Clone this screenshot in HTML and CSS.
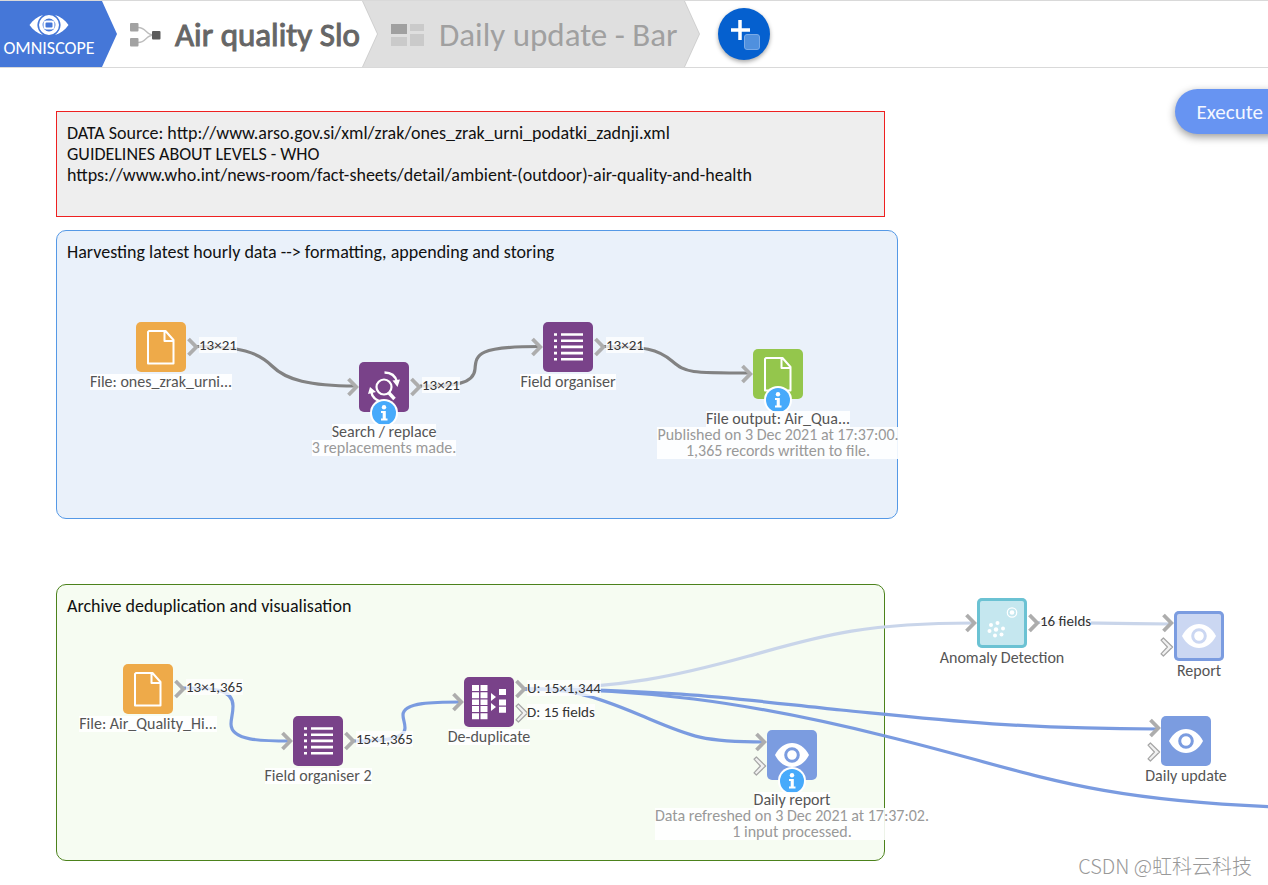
FILE: index.html
```html
<!DOCTYPE html>
<html lang="en">
<head>
<meta charset="utf-8">
<meta name="viewport" content="width=device-width, initial-scale=1">
<title>Omniscope - Air quality</title>
<link rel="stylesheet" href="styles.css">
</head>
<body>
<svg class="sprite" aria-hidden="true">
  <symbol id="chevron" viewBox="0 0 12 20"><path d="M1.5 2 9.3 10 1.5 18" fill="none" stroke="#adadad" stroke-width="3.8"/></symbol>
  <symbol id="chevron-open" viewBox="0 0 14 20"><path d="M1 3.2 3.4 1 12.6 10 3.4 19 1 16.8 7.4 10Z" fill="#f1f1f1" stroke="#a6a6a6" stroke-width="1.2" stroke-linejoin="round"/></symbol>
  <symbol id="file" viewBox="0 0 50 50"><path d="M13 9h16.500L37.500 18v23.500h-25.500V10ZM28.500 9v10H37.500" fill="none" stroke="#fff" stroke-width="2" stroke-linejoin="round"/></symbol>
  <symbol id="list" viewBox="0 0 50 50"><path d="M11 12.500h3M11 18.700h3M11 24.900h3M11 31.100h3M11 37.300h3M18 12.500h22M18 18.700h22M18 24.900h22M18 31.100h22M18 37.300h22" stroke="#fff" stroke-width="2.600"/></symbol>
  <symbol id="eye" viewBox="0 0 50 50"><path d="M8 25C16 9 34 9 42 25 34 41 16 41 8 25Z" fill="#fff"/><circle cx="25" cy="25" r="6.300" fill="none" stroke="currentColor" stroke-width="3"/></symbol>
  <symbol id="info" viewBox="0 0 28 28"><circle cx="14" cy="14" r="14" fill="#fff"/><circle cx="14" cy="14" r="12" fill="#47aafb"/><circle cx="14" cy="8.300" r="2.200" fill="#fff"/><path d="M11 12h4.800v7.500H17.500v2H11v-2h1.700V14H11Z" fill="#fff"/></symbol>
</svg>

<header class="topbar">
  <button class="tab tab-home" type="button">
    <svg width="40" height="22" viewBox="0 0 40 22" aria-hidden="true">
      <path d="M14 1C8.500 2.500 4 6 .5 11c3.500 5 8 8.500 13.500 10C6.500 15 6.500 7 14 1ZM26 1c5.500 1.500 10 5 13.500 10-3.500 5-8 8.500-13.500 10 7.500-6 7.500-14 0-20Z" fill="#fff"/>
      <circle cx="20" cy="11" r="8.200" fill="none" stroke="#fff" stroke-width="3.600"/>
      <rect x="15.500" y="7.500" width="9" height="7" rx="2" fill="none" stroke="#fff" stroke-width="2"/>
    </svg>
    <span>OMNISCOPE</span>
  </button>
  <button class="tab tab-active" type="button">
    <svg width="31" height="24" viewBox="0 0 31 24" aria-hidden="true">
      <path d="M8 4.500C17 4.500 15 12 24 12M8 19.500C17 19.500 15 12 24 12" fill="none" stroke="#bdbdbd" stroke-width="1.300"/>
      <rect width="8.500" height="8.500" rx="1" fill="#a2a2a2"/><rect y="15" width="8.500" height="8.500" rx="1" fill="#a2a2a2"/>
      <rect x="22" y="8" width="8.500" height="8.500" rx="1" fill="#5c5c5c"/>
    </svg>
    <span>Air quality Slo</span>
  </button>
  <button class="tab tab-next" type="button">
    <svg width="34" height="24" viewBox="0 0 34 24" aria-hidden="true">
      <path d="M0 1h16v10H0Z" fill="#a0a0a0"/><path d="M19 1h14v7H19ZM0 14h16v9H0ZM19 11h14v12H19Z" fill="#cacaca"/>
    </svg>
    <span>Daily update - Bar</span>
  </button>
  <button class="add" type="button" aria-label="Add">
    <svg width="52" height="52" viewBox="0 0 52 52" aria-hidden="true">
      <path d="M22 12v20M13 22h19" stroke="#fff" stroke-width="3.500"/>
      <rect x="26.500" y="26.500" width="15" height="15" rx="2.500" fill="#5090de" stroke="#79aae8"/>
    </svg>
  </button>
</header>

<main class="canvas">
  <section class="group note">DATA Source: http://www.arso.gov.si/xml/zrak/ones_zrak_urni_podatki_zadnji.xml<br>GUIDELINES ABOUT LEVELS - WHO<br>https://www.who.int/news-room/fact-sheets/detail/ambient-(outdoor)-air-quality-and-health</section>
  <section class="group harvest">Harvesting latest hourly data --&gt; formatting, appending and storing</section>
  <section class="group archive">Archive deduplication and visualisation</section>

  <svg class="wires" aria-hidden="true">
    <g transform="translate(0 -68)" fill="none" stroke-width="3.200">
      <g stroke="#828282">
        <path d="M197 346.500C240 346.500 258 352 272 366S310 386 355 386"/>
        <path d="M420 386C455 386 474 384 475 369S478 346.500 540 346.500"/>
        <path d="M604 346.500C645 346.500 658 349 672 361S690 373 750 373"/>
      </g>
      <path d="M525 689C620 689 680 675 749 656S860 623 973 623M1037 622.500C1100 622.500 1100 624 1171 624" stroke="#c9d5ea"/>
      <g stroke="#7a9be0">
        <path d="M183 688C215 688 233 689 233 706C233 714 231 718 231 724C231 741 262 741 290 741"/>
        <path d="M354 741C385 741 405 739 405 728C405 722 403 720 403 715C403 702 435 702 461 702"/>
        <path d="M525 689C570 689 590 694 640 715S700 742 764 742"/>
        <path d="M525 689C680 689 760 702 841 710S1010 729 1157 729"/>
        <path d="M525 689C640 689 740 700 885 736C1030 771 1080 800 1280 807"/>
      </g>
    </g>
  </svg>

  <article class="node n-file">
    <div class="tile orange"><svg><use href="#file"/></svg></div>
    <svg class="port out mid"><use href="#chevron"/></svg><span class="count mid">13×21</span>
    <span class="name">File: ones_zrak_urni...</span>
  </article>

  <article class="node n-search has-info">
    <svg class="port in mid"><use href="#chevron"/></svg>
    <div class="tile purple"><svg viewBox="0 0 50 50"><circle cx="25" cy="25" r="7.500" fill="none" stroke="#fff" stroke-width="2.200"/><path d="m30 31 5.500 6" stroke="#fff" stroke-width="3.400"/><path d="M25.500 10.500C32 10.500 36.500 14 38 20M24 40C17 39 13 35 12 29" fill="none" stroke="#fff" stroke-width="2.400"/><path d="m33.500 18.500 7.500-1-2.500 7.500ZM9 32l2-7 6 5Z" fill="#fff"/></svg></div>
    <svg class="badge"><use href="#info"/></svg>
    <svg class="port out mid"><use href="#chevron"/></svg><span class="count mid">13×21</span>
    <span class="name">Search / replace</span>
    <span class="status">3 replacements made.</span>
  </article>

  <article class="node n-organiser">
    <svg class="port in mid"><use href="#chevron"/></svg>
    <div class="tile purple"><svg><use href="#list"/></svg></div>
    <svg class="port out mid"><use href="#chevron"/></svg><span class="count mid">13×21</span>
    <span class="name">Field organiser</span>
  </article>

  <article class="node n-output has-info">
    <svg class="port in mid"><use href="#chevron"/></svg>
    <div class="tile green"><svg><use href="#file"/></svg></div>
    <svg class="badge"><use href="#info"/></svg>
    <span class="name">File output: Air_Qua...</span>
    <span class="status">Published on 3 Dec 2021 at 17:37:00.<br>1,365 records written to file.</span>
  </article>

  <article class="node n-history">
    <div class="tile orange"><svg><use href="#file"/></svg></div>
    <svg class="port out mid"><use href="#chevron"/></svg><span class="count mid">13×1,365</span>
    <span class="name">File: Air_Quality_Hi...</span>
  </article>

  <article class="node n-organiser2">
    <svg class="port in mid"><use href="#chevron"/></svg>
    <div class="tile purple"><svg><use href="#list"/></svg></div>
    <svg class="port out mid"><use href="#chevron"/></svg><span class="count mid">15×1,365</span>
    <span class="name">Field organiser 2</span>
  </article>

  <article class="node n-dedupe">
    <svg class="port in mid"><use href="#chevron"/></svg>
    <div class="tile purple"><svg viewBox="0 0 50 50"><path d="M8 8h7v6H8ZM16.500 8h7v6h-7ZM8 15.200h7v6H8ZM16.500 15.200h7v6h-7ZM8 22.400h7v5.500H8ZM16.500 22.400h7v5.500h-7ZM8 29h7v6H8ZM16.500 29h7v6h-7ZM8 36.200h7v6H8ZM16.500 36.200h7v6h-7ZM35 12h7v6h-7ZM35 22.500h7v6h-7ZM35 29.700h7v6h-7ZM27 16l5 4-5 4ZM27 26l5 4-5 4Z" fill="#fff"/></svg></div>
    <svg class="port out upper"><use href="#chevron"/></svg><span class="count upper">U: 15×1,344</span>
    <svg class="port out lower open"><use href="#chevron-open"/></svg><span class="count lower">D: 15 fields</span>
    <span class="name">De-duplicate</span>
  </article>

  <article class="node n-daily-report has-info">
    <svg class="port in upper"><use href="#chevron"/></svg>
    <svg class="port in lower open"><use href="#chevron-open"/></svg>
    <div class="tile blue"><svg><use href="#eye"/></svg></div>
    <svg class="badge"><use href="#info"/></svg>
    <span class="name">Daily report</span>
    <span class="status">Data refreshed on 3 Dec 2021 at 17:37:02.<br>1 input processed.</span>
  </article>

  <article class="node n-anomaly">
    <svg class="port in mid"><use href="#chevron"/></svg>
    <div class="tile teal-pale"><svg viewBox="0 0 50 50"><g fill="#fff"><circle cx="35" cy="14.500" r="2.300"/><circle cx="14" cy="27" r="2"/><circle cx="20.500" cy="25" r="2"/><circle cx="12.500" cy="33" r="2"/><circle cx="19" cy="31.500" r="2.200"/><circle cx="26" cy="30.500" r="2"/><circle cx="18" cy="37.500" r="2"/><circle cx="24.500" cy="36.500" r="2"/></g><circle cx="35" cy="14.500" r="4.700" fill="none" stroke="#fff" stroke-width="1.200"/></svg></div>
    <svg class="port out mid"><use href="#chevron"/></svg><span class="count mid">16 fields</span>
    <span class="name">Anomaly Detection</span>
  </article>

  <article class="node n-report">
    <svg class="port in upper"><use href="#chevron"/></svg>
    <svg class="port in lower open"><use href="#chevron-open"/></svg>
    <div class="tile blue-pale"><svg><use href="#eye"/></svg></div>
    <span class="name">Report</span>
  </article>

  <article class="node n-daily-update">
    <svg class="port in upper"><use href="#chevron"/></svg>
    <svg class="port in lower open"><use href="#chevron-open"/></svg>
    <div class="tile blue"><svg><use href="#eye"/></svg></div>
    <span class="name">Daily update</span>
  </article>

  <button class="execute" type="button">Execute</button>
  <p class="watermark">CSDN @虹科云科技</p>
</main>
</body>
</html>
```
FILE: styles.css
```css
* {
  box-sizing: border-box;
}

body {
  margin: 0;
  min-height: 100vh;
  display: flex;
  flex-direction: column;
  background: #fff;
  color: #111;
  font-family: Carlito, Lato, "Liberation Sans", sans-serif;
}

button {
  border: 0;
  padding: 0;
  font: inherit;
  cursor: pointer;
}

.sprite {
  position: absolute;
  width: 0;
  height: 0;
}

/* Top bar */
.topbar {
  display: flex;
  height: 68px;
  border-top: 1px solid #d9d9d9;
  border-bottom: 1px solid #d9d9d9;
}

.tab {
  position: relative;
  display: flex;
  align-items: center;
  gap: 14px;
  margin-left: -15px;
  padding: 2px 0 0 28px;
  background: #cfcfcf;
  font-size: 33px;
  -webkit-text-stroke: 1px currentColor;
  white-space: nowrap;
  clip-path: polygon(0 0, calc(100% - 15px) 0, 100% 50%, calc(100% - 15px) 100%, 0 100%);
}

.tab::before {
  content: "";
  position: absolute;
  inset: 0 1px 0 0;
  z-index: -1;
  clip-path: inherit;
}

.tab-home {
  z-index: 3;
  flex-direction: column;
  justify-content: center;
  gap: 2px;
  width: 117px;
  margin-left: 0;
  padding: 4px 19px 0 0;
  background: #4577d8;
  color: #fff;
  font-size: 18px;
  -webkit-text-stroke: 0;
  line-height: 20px;
}

.tab-active {
  z-index: 2;
  width: 276px;
  color: #666;
}

.tab-active::before {
  background: #fff;
}

.tab-next {
  z-index: 1;
  width: 337px;
  color: #a0a0a0;
  -webkit-text-stroke: 0;
}

.tab-next::before {
  background: #dfdfdf;
}

.add {
  align-self: center;
  width: 52px;
  height: 52px;
  margin-left: 18px;
  border-radius: 50%;
  background: #0560cf;
  box-shadow: 0 2px 4px rgba(0, 0, 0, 0.35);
}

.add svg {
  display: block;
}

/* Workflow canvas */
.canvas {
  position: relative;
  flex: 1;
  min-height: 817px;
  overflow: hidden;
}

.group {
  position: absolute;
  left: 56px;
  width: 829px;
  padding: 11px 10px;
  border: 1px solid;
  border-radius: 10px;
  font-size: 18px;
  line-height: 21px;
}

.note {
  top: 43px;
  height: 106px;
  border-color: #ee2020;
  border-radius: 0;
  background: #eee;
}

.harvest {
  top: 162px;
  width: 842px;
  height: 289px;
  border-color: #5599e6;
  background: #eaf1fa;
}

.archive {
  top: 516px;
  height: 277px;
  border-color: #4c821c;
  background: #f6fcf2;
}

.wires {
  position: absolute;
  inset: 0;
  width: 100%;
  height: 100%;
}

.node {
  position: absolute;
  display: flex;
  flex-direction: column;
  align-items: center;
  width: 50px;
  color: #555;
  font-size: 16px;
  line-height: 16px;
  white-space: nowrap;
}

.n-file { left: 136px; top: 254px; }
.n-search { left: 359px; top: 294px; }
.n-organiser { left: 543px; top: 254px; }
.n-output { left: 753px; top: 281px; }
.n-history { left: 123px; top: 596px; }
.n-organiser2 { left: 293px; top: 648px; }
.n-dedupe { left: 464px; top: 609px; }
.n-daily-report { left: 767px; top: 662px; }
.n-anomaly { left: 977px; top: 530px; }
.n-report { left: 1174px; top: 543px; }
.n-daily-update { left: 1161px; top: 648px; }

.tile {
  width: 50px;
  height: 50px;
  margin-bottom: 2px;
  border-radius: 5px;
}

.tile svg {
  display: block;
  width: 50px;
  height: 50px;
}

.has-info .tile {
  margin-bottom: 12px;
}

.orange { background: #eeaa49; }
.purple { background: #794289; }
.green { background: #94c64c; }
.blue { background: #7b9ce0; color: #7b9ce0; }
.teal-pale { background: #c5e7ef; box-shadow: inset 0 0 0 3px #6bc2d3; }
.blue-pale { background: #cbd7f2; box-shadow: inset 0 0 0 3px #7b9ce0; color: #cbd7f2; }

.badge {
  position: absolute;
  top: 37px;
  left: 11px;
  width: 28px;
  height: 28px;
}

.port {
  position: absolute;
  width: 12px;
  height: 20px;
}

.port.open { width: 14px; }
.port.in { right: 50px; }
.port.out { left: 51px; }
.port.mid { top: 15px; }
.port.upper { top: 2px; }
.port.lower { top: 26px; }

.count {
  position: absolute;
  left: 63px;
  color: #333;
  background: rgba(255, 255, 255, 0.75);
  font-size: 15px;
}

.count.mid { top: 15px; }
.count.upper { top: 3px; }
.count.lower { top: 27px; }

.name,
.status {
  position: relative;
  background: rgba(255, 255, 255, 0.9);
  text-align: center;
}

.status {
  color: #999;
}

.execute {
  position: absolute;
  top: 21px;
  right: -24px;
  height: 45px;
  padding: 0 29px 0 22px;
  border-radius: 23px;
  background: #6794f2;
  color: #f4f7ff;
  font-size: 21px;
  box-shadow: 0 3px 8px rgba(0, 0, 0, 0.4);
}

.watermark {
  position: absolute;
  right: 16px;
  bottom: 7px;
  margin: 0;
  color: #999;
  font-family: "Noto Sans CJK SC", sans-serif;
  font-size: 20px;
  font-weight: 300;
  line-height: 24px;
}
```
